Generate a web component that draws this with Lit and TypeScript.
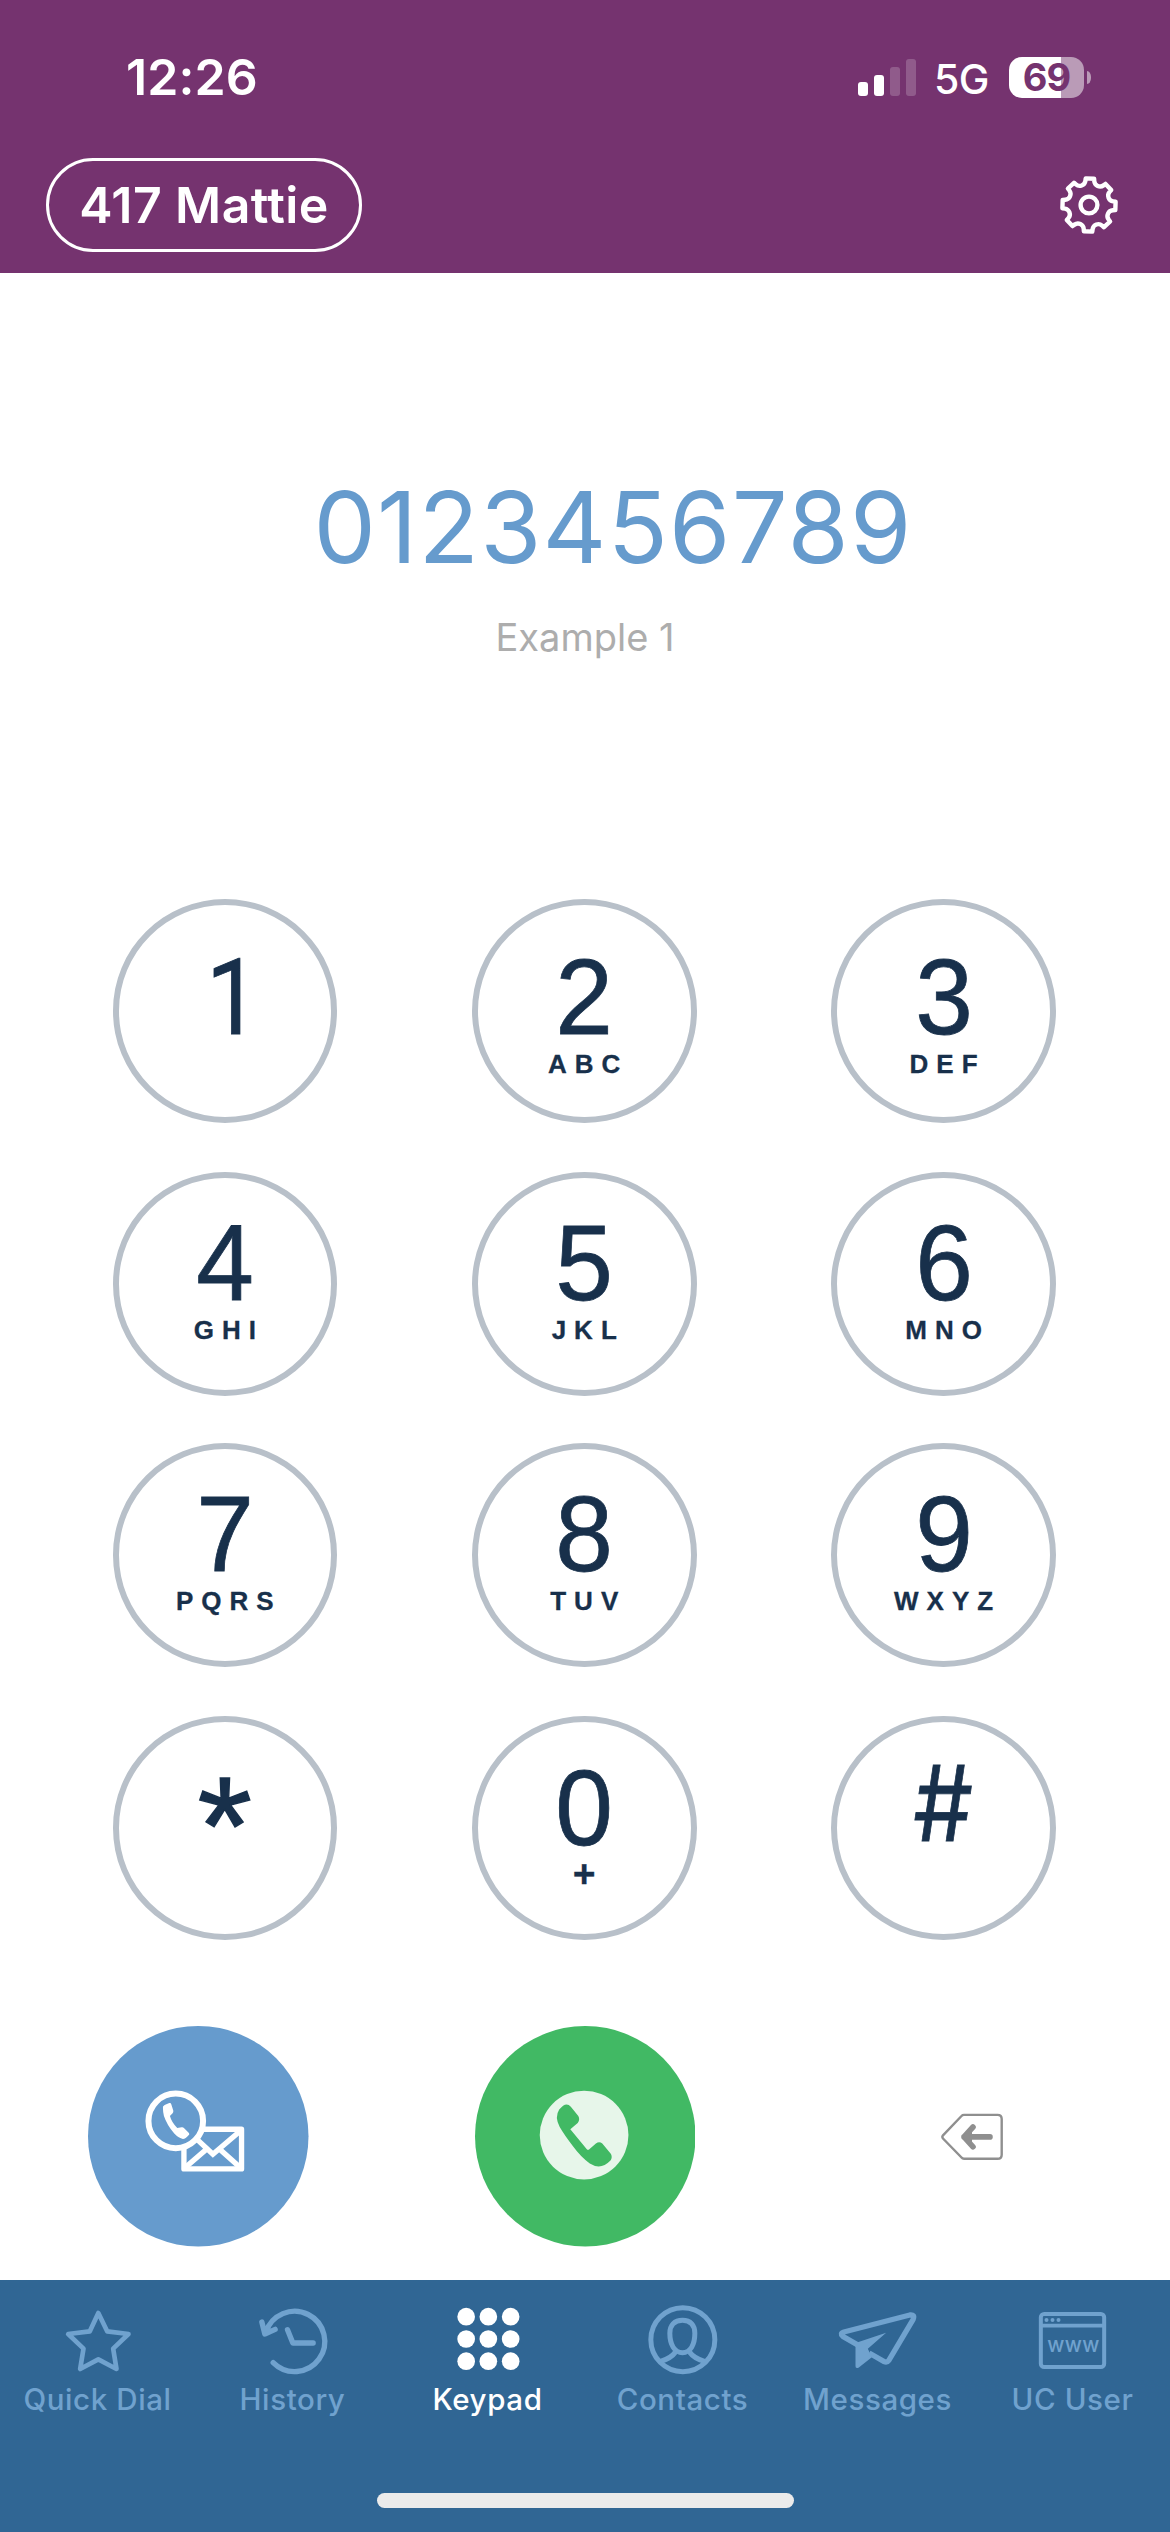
import { LitElement, html, svg, css } from "lit";
import { customElement, property } from "lit/decorators.js";
import { classMap } from "lit/directives/class-map.js";

interface Key {
  digit: string;
  letters?: string;
  kind?: string;
}

interface Tab {
  label: string;
  box: string;
  icon: unknown;
  active?: boolean;
}

const KEYS: Key[] = [
  { digit: "1", kind: "one" },
  { digit: "2", letters: "ABC", kind: "top" },
  { digit: "3", letters: "DEF", kind: "top" },
  { digit: "4", letters: "GHI" },
  { digit: "5", letters: "JKL" },
  { digit: "6", letters: "MNO" },
  { digit: "7", letters: "PQRS" },
  { digit: "8", letters: "TUV" },
  { digit: "9", letters: "WXYZ" },
  { digit: "*", kind: "star" },
  { digit: "0", letters: "+", kind: "zero" },
  { digit: "#", kind: "hash" },
];

const DOTS = [140, 207, 273.5].flatMap((y) => [197, 263.5, 330.5].map((x) => [x, y]));

const TABS: Tab[] = [
  {
    label: "Quick Dial",
    box: "172.5 90 240 240",
    icon: svg`<path fill="none" stroke="currentColor" stroke-width="14" stroke-linejoin="round"
      d="M293.5 129 L320 184 L384 192 L338 236 L348 297 L293.5 268 L239 297 L249 236 L203 192 L268 184 Z"/>`,
  },
  {
    label: "History",
    box: "757.5 90 240 240",
    icon: svg`<path fill="none" stroke="currentColor" stroke-width="16" stroke-linecap="round" stroke-linejoin="round"
      d="M818 278 A90.5 90.5 0 1 0 796 187 M784 156 L793 192 L824 178 M861 179 L877 219 H938"/>`,
  },
  {
    label: "Keypad",
    box: "142.5 90 240 240",
    active: true,
    icon: svg`${DOTS.map(([x, y]) => svg`<circle cx=${x} cy=${y} r="26.5" fill="currentColor"/>`)}`,
  },
  {
    label: "Contacts",
    box: "727.5 90 240 240",
    icon: svg`<g fill="none" stroke="currentColor" stroke-width="15">
      <circle cx="847" cy="209" r="96"/>
      <path d="M846 151 C822 151 808 165 808 190 C808 224 822 248 846 248 C870 248 883 224 883 190 C883 165 870 151 846 151 Z"/>
      <path d="M825 246 Q812 265 778 275 M867 246 Q880 265 914 275"/></g>`,
  },
  {
    label: "Messages",
    box: "172.5 90 240 240",
    icon: svg`<path fill="none" stroke="currentColor" stroke-width="16" stroke-linejoin="round"
      d="M234 226 L187 199 Q177 190 190 186 L388 135 Q404 133 398 148 L325 271 Q319 279 311 275 L266 249"/>
      <path fill="currentColor" d="M317 188 L262 236 L274 262 L234 293 Q225 297 225 289 V219 Z"/>`,
  },
  {
    label: "UC User",
    box: "757.5 90 240 240",
    icon: svg`<rect x="781" y="132" width="190" height="159" rx="10" fill="none" stroke="currentColor" stroke-width="12"/>
      <path stroke="currentColor" stroke-width="11" d="M781 167 H971"/>
      <circle cx="798" cy="150" r="6" fill="currentColor"/>
      <circle cx="816" cy="150" r="6" fill="currentColor"/>
      <circle cx="834" cy="150" r="6" fill="currentColor"/>
      <text x="800" y="246" font-family="Inter, sans-serif" font-size="62" font-weight="500" textLength="157" fill="currentColor">www</text>`,
  },
];

function gearPath(): string {
  const at = (r: number, deg: number) => {
    const a = (deg * Math.PI) / 180;
    return `${(30 + r * Math.sin(a)).toFixed(2)} ${(30 - r * Math.cos(a)).toFixed(2)}`;
  };
  let d = "";
  for (let i = 0; i < 8; i++) {
    const a = i * 45 + 2;
    d += `${i ? "L" : "M"}${at(24.4, a - 10.5)} L${at(26.8, a - 9)} L${at(26.8, a + 9)} L${at(24.4, a + 10.5)} `;
    d += `A5.8 5.8 0 0 0 ${at(24.4, a + 34.5)} `;
  }
  return d + "Z";
}

@customElement("dial-key")
class DialKey extends LitElement {
  @property({ attribute: false }) key!: Key;

  static styles = css`
    :host {
      display: block;
      width: 224.7px;
      height: 224px;
    }
    .key {
      box-sizing: border-box;
      width: 100%;
      height: 100%;
      border: 6px solid #b8c0c9;
      border-radius: 50%;
      padding-top: 31.5px;
      display: flex;
      flex-direction: column;
      align-items: center;
      color: #18304b;
      font-family: "Liberation Sans", Arial, sans-serif;
    }
    .top {
      padding-top: 38px;
    }
    .one {
      padding: 39px 0 0 15px;
    }
    .digit {
      font-size: 108px;
      line-height: 108px;
      height: 108px;
      transform: scaleX(0.96);
      -webkit-text-stroke: 0.8px #18304b;
    }
    .one .digit {
      font-family: Roboto, sans-serif;
      font-size: 106px;
      transform: scaleX(0.9);
    }
    .star .digit {
      font-size: 140px;
      line-height: 143px;
      transform: none;
      -webkit-text-stroke: 1.4px #18304b;
    }
    .hash .digit {
      font-family: Inter, sans-serif;
      font-size: 105px;
      line-height: 98px;
      font-weight: 400;
      transform: scaleX(0.9);
    }
    .letters {
      font-size: 26px;
      line-height: 26px;
      font-weight: 700;
      letter-spacing: 8px;
      margin-right: -8px;
      -webkit-text-stroke: 0.3px #18304b;
    }
    .zero .letters {
      font-size: 39px;
      line-height: 24px;
      letter-spacing: 0;
      margin-right: 0;
    }
  `;

  render() {
    const k = this.key;
    return html`<div class=${classMap({ key: true, [k.kind ?? "plain"]: true })}>
      <span class="digit">${k.digit}</span>
      ${k.letters ? html`<span class="letters">${k.letters}</span>` : null}
    </div>`;
  }
}

@customElement("app-root")
class AppRoot extends LitElement {
  static styles = css`
    :host {
      display: block;
      width: 1170px;
      height: 2532px;
      background: #fff;
      overflow: hidden;
      font-family: Inter, "Liberation Sans", sans-serif;
    }
    svg {
      display: block;
    }
    .screen {
      height: 2532px;
      display: flex;
      flex-direction: column;
    }
    .header {
      box-sizing: border-box;
      height: 273px;
      background: #75336f;
      color: #fff;
      padding: 57px 52px 0 46px;
    }
    .status {
      height: 41px;
      display: flex;
      align-items: center;
    }
    .time {
      margin: 0 auto 0 80px;
      font-size: 50px;
      line-height: 41px;
      font-weight: 600;
      letter-spacing: 0.1px;
    }
    .signal {
      width: 58px;
      height: 37px;
      margin-right: 18px;
    }
    .network {
      width: 57px;
      font-size: 41px;
      line-height: 41px;
      font-weight: 500;
      letter-spacing: -0.5px;
      margin-right: 18px;
      margin-top: 3px;
    }
    .battery {
      width: 75px;
      height: 41px;
      border-radius: 13px;
      background: linear-gradient(90deg, #fff 52px, #ba9bb7 52px);
      color: #75336f;
      text-align: center;
      font-size: 38px;
      line-height: 41px;
      font-weight: 700;
      letter-spacing: -1px;
    }
    .nub {
      width: 4px;
      height: 13px;
      margin: 0 27px 0 3px;
      border-radius: 0 4px 4px 0 / 0 6px 6px 0;
      background: #ba9bb7;
    }
    .account {
      margin-top: 59px;
      height: 95px;
      display: flex;
      justify-content: space-between;
      align-items: center;
    }
    .pill {
      box-sizing: border-box;
      width: 316px;
      height: 94px;
      border: 3px solid #fff;
      border-radius: 47px;
      text-align: center;
      font-size: 50px;
      line-height: 88px;
      font-weight: 600;
      letter-spacing: 0.4px;
      white-space: nowrap;
    }
    .gear {
      width: 60px;
      height: 60px;
      margin-right: -1px;
    }
    .display {
      box-sizing: border-box;
      height: 625.5px;
      padding-top: 194px;
      display: flex;
      flex-direction: column;
      align-items: center;
    }
    .number {
      margin-left: 56px;
      font-size: 99px;
      line-height: 120px;
      color: #669bcd;
      letter-spacing: 1.2px;
    }
    .match {
      margin-top: 30px;
      font-size: 38px;
      line-height: 40px;
      color: #adadad;
    }
    .keypad {
      height: 1127.5px;
      padding-left: 112.5px;
      display: grid;
      grid-template-columns: repeat(3, 224.7px);
      column-gap: 134.7px;
      grid-template-rows: 273px 271px 273.5px 224px;
      align-content: start;
    }
    .actions {
      height: 254px;
      padding-left: 88px;
      display: flex;
      align-items: flex-start;
    }
    .round {
      width: 220.5px;
      height: 220.5px;
    }
    .call {
      margin-left: 166px;
    }
    .erase {
      width: 64px;
      height: 48px;
      margin: 87px 0 0 244.5px;
    }
    .tabs {
      flex: 1;
      background: #306694;
      display: flex;
      flex-direction: column;
      align-items: center;
    }
    .tab-row {
      width: 100%;
      height: 213px;
      display: grid;
      grid-template-columns: repeat(6, 195px);
      align-content: start;
    }
    .tab {
      padding-top: 20px;
      display: flex;
      flex-direction: column;
      align-items: center;
      color: #70a2ce;
      font-size: 29.5px;
      line-height: 39px;
      font-weight: 500;
      letter-spacing: 0.6px;
      white-space: nowrap;
    }
    .active {
      color: #fff;
    }
    .tab-icon {
      width: 80px;
      height: 80px;
    }
    .home {
      width: 417px;
      height: 15px;
      border-radius: 8px;
      background: #ebebeb;
    }
  `;

  render() {
    return html`<div class="screen">
      <header class="header">
        <div class="status">
          <span class="time">12:26</span>
          <svg class="signal" viewBox="0 0 58 37" fill="#fff">
            <rect x="0" y="23" width="10" height="14" rx="3" />
            <rect x="16" y="16" width="10" height="21" rx="3" />
            <rect x="32" y="8" width="10" height="29" rx="3" fill-opacity="0.2" />
            <rect x="48" y="0" width="10" height="37" rx="3" fill-opacity="0.2" />
          </svg>
          <span class="network">5G</span>
          <span class="battery">69</span>
          <span class="nub"></span>
        </div>
        <div class="account">
          <span class="pill">417 Mattie</span>
          <svg class="gear" viewBox="0 0 60 60" fill="none" stroke="#fff" stroke-width="4.4" stroke-linejoin="round">
            <path d=${gearPath()} />
            <circle cx="30" cy="30" r="8.4" />
          </svg>
        </div>
      </header>

      <section class="display">
        <span class="number">0123456789</span>
        <span class="match">Example 1</span>
      </section>

      <section class="keypad">${KEYS.map((k) => html`<dial-key .key=${k}></dial-key>`)}</section>

      <section class="actions">
        <svg class="round" viewBox="53 49 662 662">
          <circle cx="384" cy="380" r="331" fill="#669bcd" />
          <g fill="none" stroke="#fff" stroke-width="16">
            <rect x="341" y="359" width="173" height="119" stroke-linejoin="round" />
            <path d="M365 375 L428 434 L510 364 M345 474 L406 421 M510 474 L451 421" />
          </g>
          <circle cx="316.5" cy="334" r="82" fill="#669bcd" stroke="#fff" stroke-width="18" />
          <path
            fill="#fff"
            d="M278 296 Q276 290 283 286 L297 280 Q302 279 303 284 L309 303 Q310 308 307 311 L299 319 Q304 338 321 355 L334 353 Q338 352 341 355 L356 370 Q359 374 355 377 Q346 388 338 388 Q326 387 312 372 Q290 346 281 319 Q278 308 278 296 Z"
          />
        </svg>
        <svg class="round call" viewBox="14.6 16.3 220.7 220.7">
          <circle cx="124.95" cy="126.65" r="110.35" fill="#41b964" />
          <circle cx="123.8" cy="125.5" r="44.4" fill="#e7f6ea" />
          <path
            fill="#41b964"
            d="M98.9 100 Q105.5 91.5 110.5 97 L118 106.3 Q120 110 117.4 113.3 L110 119.7 L126.3 139.3 Q127.6 141 129.3 139.3 L135.6 134 Q139 131.3 142 134 L150.7 144.5 Q152.4 148 150.2 151 Q140.5 161 129.5 154 Q120.5 147.5 112.5 136.5 Q104 125.5 99.4 117.5 Q94 107.5 98.9 100 Z"
          />
        </svg>
        <svg class="erase" viewBox="480 103 64 48" fill="none" stroke="#8f8f8f" stroke-linejoin="round" stroke-linecap="round">
          <path stroke-width="2.4" d="M504 104.9 H537.5 Q541.7 104.9 541.7 109 V144.7 Q541.7 148.8 537.5 148.8 H504 Q502.5 148.8 501.5 147.5 L483 128.5 Q481.7 126.9 483 125.3 L501.5 106 Q502.5 104.9 504 104.9 Z" />
          <path stroke-width="5.6" d="M504 126.9 H530 M513 117 L504 126.9 L513 136.8" />
          <path fill="#8f8f8f" stroke="none" d="M503 126.9 L512 117 V137 Z" />
        </svg>
      </section>

      <nav class="tabs">
        <div class="tab-row">
          ${TABS.map(
            (t) => html`<div class=${classMap({ tab: true, active: !!t.active })}>
              <svg class="tab-icon" viewBox=${t.box}>${t.icon}</svg>
              <span>${t.label}</span>
            </div>`
          )}
        </div>
        <div class="home"></div>
      </nav>
    </div>`;
  }
}
